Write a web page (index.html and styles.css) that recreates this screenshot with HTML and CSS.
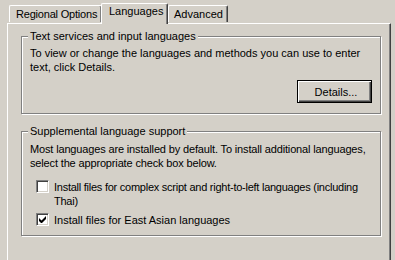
FILE: index.html
```html
<!doctype html>
<html lang="en">
<head>
    <meta charset="UTF-8">
    <title>Regional and Language Options</title>
    <link rel="stylesheet" href="styles.css">
</head>
<body>
<div class="dialog">
    <div class="tabs">
        <div class="tab tab-regional">Regional Options</div>
        <div class="tab tab-languages active">Languages</div>
        <div class="tab tab-advanced">Advanced</div>
    </div>
    <div class="panel">
        <fieldset class="group group-text">
            <legend>Text services and input languages</legend>
            <p>To view or change the languages and methods you can use to enter<br>text, click Details.</p>
            <div class="actions">
                <button class="btn default" type="button">Details...</button>
            </div>
        </fieldset>
        <fieldset class="group group-supp">
            <legend>Supplemental language support</legend>
            <p>Most languages are installed by default. To install additional languages,<br>select the appropriate check box below.</p>
            <label class="check first">
                <span class="box"></span>
                <span class="label tight">Install files for complex script and right-to-left languages (including<br>Thai)</span>
            </label>
            <label class="check">
                <span class="box">
                    <svg width="7" height="7" viewBox="0 0 7 7"><path d="M0 2v3l2 2h1l4-4V0L2.5 4.5z" fill="#000"/></svg>
                </span>
                <span class="label">Install files for East Asian languages</span>
            </label>
        </fieldset>
    </div>
</div>
</body>
</html>
```

FILE: styles.css
```css
html, body {
    margin: 0;
    padding: 0;
    background: #d4d0c8;
}

body {
    font-family: "Liberation Sans", Arial, sans-serif;
    font-size: 11px;
    line-height: 14px;
    color: #000;
    overflow: hidden;
}

.dialog {
    width: 395px;
    height: 260px;
    padding-top: 2px;
    box-sizing: border-box;
}

.tabs {
    display: flex;
    align-items: flex-end;
    height: 21px;
    margin-left: 9px;
    position: relative;
    z-index: 1;
}

.tab {
    box-sizing: border-box;
    height: 17px;
    margin-bottom: 1px;
    padding: 1px 0 0 6px;
    border-left: 1px solid #fff;
    border-top: 1px solid #fff;
    border-right: 1px solid #404040;
    box-shadow: inset -1px 0 #808080;
    border-radius: 2px 2px 0 0;
    white-space: nowrap;
}

.tab-regional {
    width: 93px;
    margin-right: -1px;
    letter-spacing: -0.2px;
}

.tab-languages {
    width: 67px;
}

.tab-advanced {
    width: 60px;
    padding-left: 5px;
}

.tab.active {
    height: 21px;
    margin-bottom: -1px;
    padding: 0 0 0 7px;
    background: #d4d0c8;
}

.panel {
    box-sizing: border-box;
    width: 384px;
    height: 250px;
    margin-left: 7px;
    padding: 5px 0 0 13px;
    border-left: 1px solid #fff;
    border-top: 1px solid #fff;
    border-right: 1px solid #404040;
    box-shadow: inset -1px 0 #808080;
}

.group {
    box-sizing: border-box;
    width: 360px;
    margin: 0;
    padding: 0 8px;
    border: 1px solid #808080;
    box-shadow: inset 1px 1px #fff, 1px 1px #fff;
}

.group legend {
    padding: 0 2px;
    margin-left: -2px;
    background: #d4d0c8;
    line-height: 14px;
}

.group p {
    margin: 0;
    white-space: nowrap;
}

.group-text {
    height: 85px;
}

.group-text p {
    margin-top: 3px;
}

.group-supp {
    height: 112px;
    margin-top: 10px;
}

.group-supp p {
    margin-top: 4px;
    margin-bottom: 10px;
    letter-spacing: -0.15px;
}

.actions {
    display: flex;
    justify-content: flex-end;
    margin-top: 6px;
}

.btn {
    box-sizing: border-box;
    width: 75px;
    height: 23px;
    padding: 0 0 0 3px;
    background: #d4d0c8;
    font: inherit;
    color: #000;
    border: 1px solid #000;
    box-shadow: inset 1px 1px #fff, inset -1px -1px #404040, inset -2px -2px #808080;
    border-radius: 0;
}

.check {
    display: flex;
    align-items: flex-start;
    padding-left: 6px;
    margin-bottom: 5px;
}

.check .box {
    box-sizing: border-box;
    flex: none;
    width: 13px;
    height: 13px;
    margin-right: 5px;
    background: #fff;
    border-top: 1px solid #808080;
    border-left: 1px solid #808080;
    border-right: 1px solid #fff;
    border-bottom: 1px solid #fff;
    box-shadow: inset 1px 1px #404040, inset -1px -1px #d4d0c8;
    display: flex;
    align-items: center;
    justify-content: center;
}

.check .label {
    white-space: nowrap;
}

.check .tight {
    letter-spacing: -0.25px;
}
```
